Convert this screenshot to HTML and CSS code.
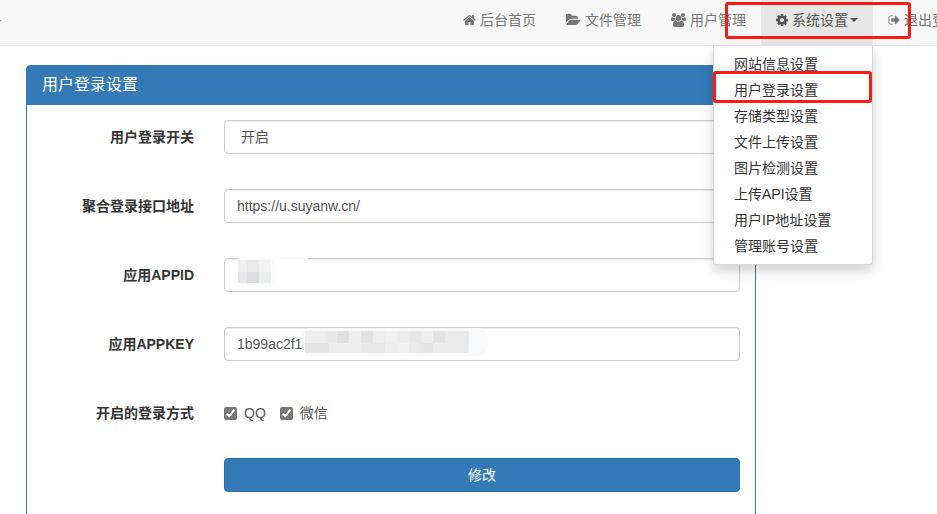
FILE: index.html
```html
<!DOCTYPE html>
<html lang="zh-CN">
<head>
<meta charset="utf-8">
<title>用户登录设置</title>
<link rel="stylesheet" href="styles.css">
</head>
<body>
<nav class="navbar">
  <span class="brand-tail"></span>
  <ul class="nav">
    <li><a class="nav-link"><svg class="ico ico-13" viewBox="0 0 1664 1792"><path d="M1408 992v480q0 26-19 45t-45 19h-384v-384h-256v384h-384q-26 0-45-19t-19-45v-480q0-1 .5-3t.5-3l575-474 575 474q1 2 1 6zm223-69l-62 74q-8 9-21 11h-3q-13 0-21-7l-692-577-692 577q-12 8-24 7-13-2-21-11l-62-74q-8-10-7-23.500t11-21.500l719-599q32-26 76-26t76 26l244 204v-195q0-14 9-23t23-9h192q14 0 23 9t9 23v408l219 182q10 8 11 21.500t-7 23.500z"/></svg>后台首页</a></li>
    <li><a class="nav-link"><svg class="ico ico-15" viewBox="0 0 1920 1792"><path d="M1845 931q0 35-35 74l-336 396q-43 51-120.500 86.500t-143.500 35.500h-1088q-34 0-60.500-13t-26.500-43q0-35 35-74l336-396q43-51 120.500-86.500t143.500-35.500h1088q34 0 60.500 13t26.500 43zm-343-345v160h-832q-94 0-197 47.500t-164 119.500l-337 396-5 6q0-4-.5-12.500t-.5-12.500v-960q0-92 66-158t158-66h320q92 0 158 66t66 158v32h544q92 0 158 66t66 158z"/></svg>文件管理</a></li>
    <li><a class="nav-link"><svg class="ico ico-15" viewBox="0 0 1920 1792"><path d="M593 896q-162 5-265 128h-134q-82 0-138-40.500t-56-118.500q0-353 124-353 6 0 43.500 21t97.500 42.500 119 21.500q67 0 133-23-5 37-5 66 0 139 81 256zm1071 637q0 120-73 189.500t-194 69.500h-874q-121 0-194-69.500t-73-189.500q0-53 3.500-103.500t14-109 26.500-108.500 43-97.500 62-81 85.500-53.500 111.500-20q10 0 43 21.500t73 48 107 48 135 21.500 135-21.500 107-48 73-48 43-21.500q61 0 111.500 20t85.500 53.500 62 81 43 97.500 26.500 108.500 14 109 3.500 103.500zm-1024-1277q0 106-75 181t-181 75-181-75-75-181 75-181 181-75 181 75 75 181zm704 384q0 159-112.500 271.500t-271.500 112.500-271.500-112.500-112.500-271.500 112.500-271.500 271.500-112.500 271.500 112.500 112.500 271.500zm576 225q0 78-56 118.500t-138 40.500h-134q-103-123-265-128 81-117 81-256 0-29-5-66 66 23 133 23 59 0 119-21.500t97.500-42.500 43.500-21q124 0 124 353zm-128-609q0 106-75 181t-181 75-181-75-75-181 75-181 181-75 181 75 75 181z"/></svg>用户管理</a></li>
    <li class="nav-open">
      <a class="nav-link active"><svg class="ico ico-12" viewBox="0 0 1536 1792"><path d="M1024 896q0-106-75-181t-181-75-181 75-75 181 75 181 181 75 181-75 75-181zm512-109v222q0 12-8 23t-20 13l-185 28q-19 54-39 91 35 50 107 138 10 12 10 25t-9 23q-27 37-99 108t-94 71q-12 0-26-9l-138-108q-44 23-91 38-16 136-29 186-7 28-36 28h-222q-14 0-24.500-8.500t-11.500-21.500l-28-184q-49-16-90-37l-141 107q-10 9-25 9-14 0-25-11-126-114-165-168-7-10-7-23 0-12 8-23 15-21 51-66.500t54-70.500q-27-50-41-99l-183-27q-13-2-21-12.500t-8-23.500v-222q0-12 8-23t19-13l186-28q14-46 39-92-40-57-107-138-10-12-10-24 0-10 9-23 26-36 98.500-107.500t94.500-71.500q13 0 26 10l138 107q44-23 91-38 16-136 29-186 7-28 36-28h222q14 0 24.500 8.500t11.500 21.500l28 184q49 16 90 37l142-107q9-9 24-9 13 0 25 10 129 119 165 170 7 8 7 22 0 12-8 23-15 21-51 66.500t-54 70.500q26 50 41 98l183 28q13 2 21 12.500t8 23.500z"/></svg>系统设置<span class="caret"></span></a>
      <ul class="menu">
        <li>网站信息设置</li>
        <li>用户登录设置</li>
        <li>存储类型设置</li>
        <li>文件上传设置</li>
        <li>图片检测设置</li>
        <li>上传API设置</li>
        <li>用户IP地址设置</li>
        <li>管理账号设置</li>
      </ul>
    </li>
    <li><a class="nav-link"><svg class="ico ico-12" viewBox="0 0 1664 1792"><path d="M704 1440q0 4 1 20t.5 26.500-3 23.500-10 19.500-20.500 6.500h-320q-119 0-203.500-84.500t-84.500-203.500v-704q0-119 84.500-203.500t203.500-84.500h320q13 0 22.500 9.500t9.500 22.500q0 4 1 20t.5 26.500-3 23.500-10 19.500-20.500 6.500h-320q-66 0-113 47t-47 113v704q0 66 47 113t113 47h312l11.500 1 11.500 3 8 5.500 7 9 2 13.500zm928-544q0 26-19 45l-544 544q-19 19-45 19t-45-19-19-45v-288h-448q-26 0-45-19t-19-45v-384q0-26 19-45t45-19h448v-288q0-26 19-45t45-19 45 19l544 544q19 19 19 45z"/></svg>退出登录</a></li>
  </ul>
</nav>

<section class="panel">
  <h3 class="panel-heading">用户登录设置</h3>
  <form class="panel-body">
    <div class="row">
      <label class="row-label">用户登录开关</label>
      <select class="control"><option>开启</option></select>
    </div>
    <div class="row">
      <label class="row-label">聚合登录接口地址</label>
      <input class="control" type="text" value="https://u.suyanw.cn/">
    </div>
    <div class="row">
      <label class="row-label">应用APPID</label>
      <div class="field">
        <input class="control" type="text" value="">
        <svg class="mosaic mosaic-a" width="84" height="34" viewBox="0 0 84 34">
          <rect x="16" y="-4" width="68" height="10" rx="5" fill="#fff" opacity=".85"/>
          <rect x="11" y="0" width="40" height="29" rx="8" fill="#fbfbfc"/>
          <rect x="14" y="2" width="9" height="12" fill="#f0f0f1"/>
          <rect x="23" y="2" width="12" height="12" fill="#eaeaec"/>
          <rect x="35" y="2" width="12" height="12" fill="#f4f4f5"/>
          <rect x="14" y="14" width="9" height="11" fill="#e6e6e8"/>
          <rect x="23" y="14" width="12" height="11" fill="#dcdde0"/>
          <rect x="35" y="14" width="12" height="11" fill="#eceeee"/>
        </svg>
      </div>
    </div>
    <div class="row">
      <label class="row-label">应用APPKEY</label>
      <div class="field">
        <input class="control" type="text" value="1b99ac2f1">
        <svg class="mosaic mosaic-b" width="190" height="34" viewBox="0 0 190 34">
          <rect x="0" y="1" width="186" height="28" rx="9" fill="#f8f9fa"/>
          <rect x="3" y="4" width="20" height="12" fill="#eeeeee"/>
          <rect x="23" y="4" width="12" height="12" fill="#e9e9e9"/>
          <rect x="35" y="4" width="12" height="12" fill="#e1e1e1"/>
          <rect x="47" y="4" width="12" height="12" fill="#eeeeee"/>
          <rect x="59" y="4" width="12" height="12" fill="#e3e3e3"/>
          <rect x="71" y="4" width="12" height="12" fill="#ededed"/>
          <rect x="83" y="4" width="12" height="12" fill="#f0f0f0"/>
          <rect x="95" y="4" width="12" height="12" fill="#ececec"/>
          <rect x="107" y="4" width="12" height="12" fill="#e8e8e8"/>
          <rect x="119" y="4" width="12" height="12" fill="#eeeeee"/>
          <rect x="131" y="4" width="12" height="12" fill="#e4e4e4"/>
          <rect x="143" y="4" width="24" height="12" fill="#ebebeb"/>
          <rect x="3" y="16" width="24" height="10" fill="#e4e4e4"/>
          <rect x="27" y="16" width="32" height="10" fill="#ededed"/>
          <rect x="59" y="16" width="24" height="10" fill="#e8e8e8"/>
          <rect x="83" y="16" width="12" height="10" fill="#eeeeee"/>
          <rect x="95" y="16" width="12" height="10" fill="#f1f1f1"/>
          <rect x="107" y="16" width="12" height="10" fill="#eaeaea"/>
          <rect x="119" y="16" width="12" height="10" fill="#e5e5e5"/>
          <rect x="131" y="16" width="36" height="10" fill="#ececec"/>
        </svg>
      </div>
    </div>
    <div class="row row-checks">
      <label class="row-label">开启的登录方式</label>
      <div class="checks">
        <label class="check"><input type="checkbox" checked>QQ</label>
        <label class="check"><input type="checkbox" checked>微信</label>
      </div>
    </div>
    <div class="row row-submit">
      <button class="submit" type="button">修改</button>
    </div>
  </form>
</section>

<div class="mark mark-nav"></div>
<div class="mark mark-menu"></div>
</body>
</html>
```

FILE: styles.css
```css
* { box-sizing: border-box; }
html, body { height: 100%; }
body {
  margin: 0;
  overflow: hidden;
  position: relative;
  background: #fff;
  color: #333;
  font: 14px/20px "Liberation Sans", "Noto Sans CJK SC", sans-serif;
}
ul { list-style: none; margin: 0; padding: 0; }

.navbar {
  height: 46px;
  background: #f8f8f8;
  border-bottom: 1px solid #e7e7e7;
  position: relative;
}
.brand-tail {
  position: absolute;
  left: 0;
  top: 20px;
  width: 1px;
  height: 1px;
  background: #7fa8cf;
}
.nav {
  display: flex;
  width: max-content;
  margin-left: 448px;
  white-space: nowrap;
}
.nav-open { position: relative; }
.nav-link {
  display: flex;
  align-items: center;
  height: 45px;
  padding: 0 15px 5px;
  color: #777;
}
.nav-link.active { background: #e7e7e7; color: #555; }
.ico { flex: none; height: 14px; margin-right: 4px; fill: currentColor; }
.ico-12 { width: 12px; }
.ico-13 { width: 13px; }
.ico-15 { width: 15px; }
.caret {
  width: 0;
  height: 0;
  margin-left: 2px;
  border-top: 4px solid currentColor;
  border-left: 4px solid transparent;
  border-right: 4px solid transparent;
}
.menu {
  position: absolute;
  top: 46px;
  right: 0;
  z-index: 5;
  width: 160px;
  padding: 5px 0;
  background: #fff;
  border: 1px solid rgba(0, 0, 0, .15);
  border-top: 0;
  border-radius: 0 0 4px 4px;
  box-shadow: 0 6px 12px rgba(0, 0, 0, .175);
}
.menu li { padding: 3px 20px; color: #333; }

.panel {
  width: 730px;
  height: 480px;
  margin: 19px 0 0 26px;
  border: 1px solid #337ab7;
  border-radius: 4px;
}
.panel-heading {
  height: 39px;
  margin: 0;
  padding: 9px 15px 10px;
  background: #337ab7;
  color: #fff;
  font-size: 16px;
  font-weight: 400;
  line-height: 20px;
}
.panel-body { padding-top: 15px; }
.row {
  display: grid;
  grid-template-columns: 167px 516px;
  column-gap: 30px;
  margin-bottom: 35px;
}
.row-label {
  padding-top: 7px;
  text-align: right;
  font-weight: 700;
}
.field { position: relative; }
.control {
  display: block;
  width: 100%;
  height: 34px;
  padding: 6px 12px;
  background: #fff;
  border: 1px solid #ccc;
  border-radius: 4px;
  box-shadow: inset 0 1px 1px rgba(0, 0, 0, .075);
  color: #555;
  font: inherit;
}
.mosaic { position: absolute; top: 0; overflow: visible; }
.mosaic-a { left: 0; }
.mosaic-b { left: 78px; }
.checks { display: flex; gap: 14px; padding-top: 7px; }
.check { display: flex; align-items: center; color: #555; }
.check input {
  width: 13px;
  height: 13px;
  margin: 0 7px 0 0;
  accent-color: #767676;
}
.row-submit .submit { grid-column: 2; }
.submit {
  height: 34px;
  background: #337ab7;
  border: 1px solid #2e6da4;
  border-radius: 4px;
  color: #fff;
  font: inherit;
}

.mark {
  position: absolute;
  z-index: 10;
  border: 3px solid #fb1b12;
  border-radius: 3px;
}
.mark-nav { left: 725px; top: 2px; width: 186px; height: 37px; }
.mark-menu { left: 713px; top: 71px; width: 159px; height: 32px; }
```
